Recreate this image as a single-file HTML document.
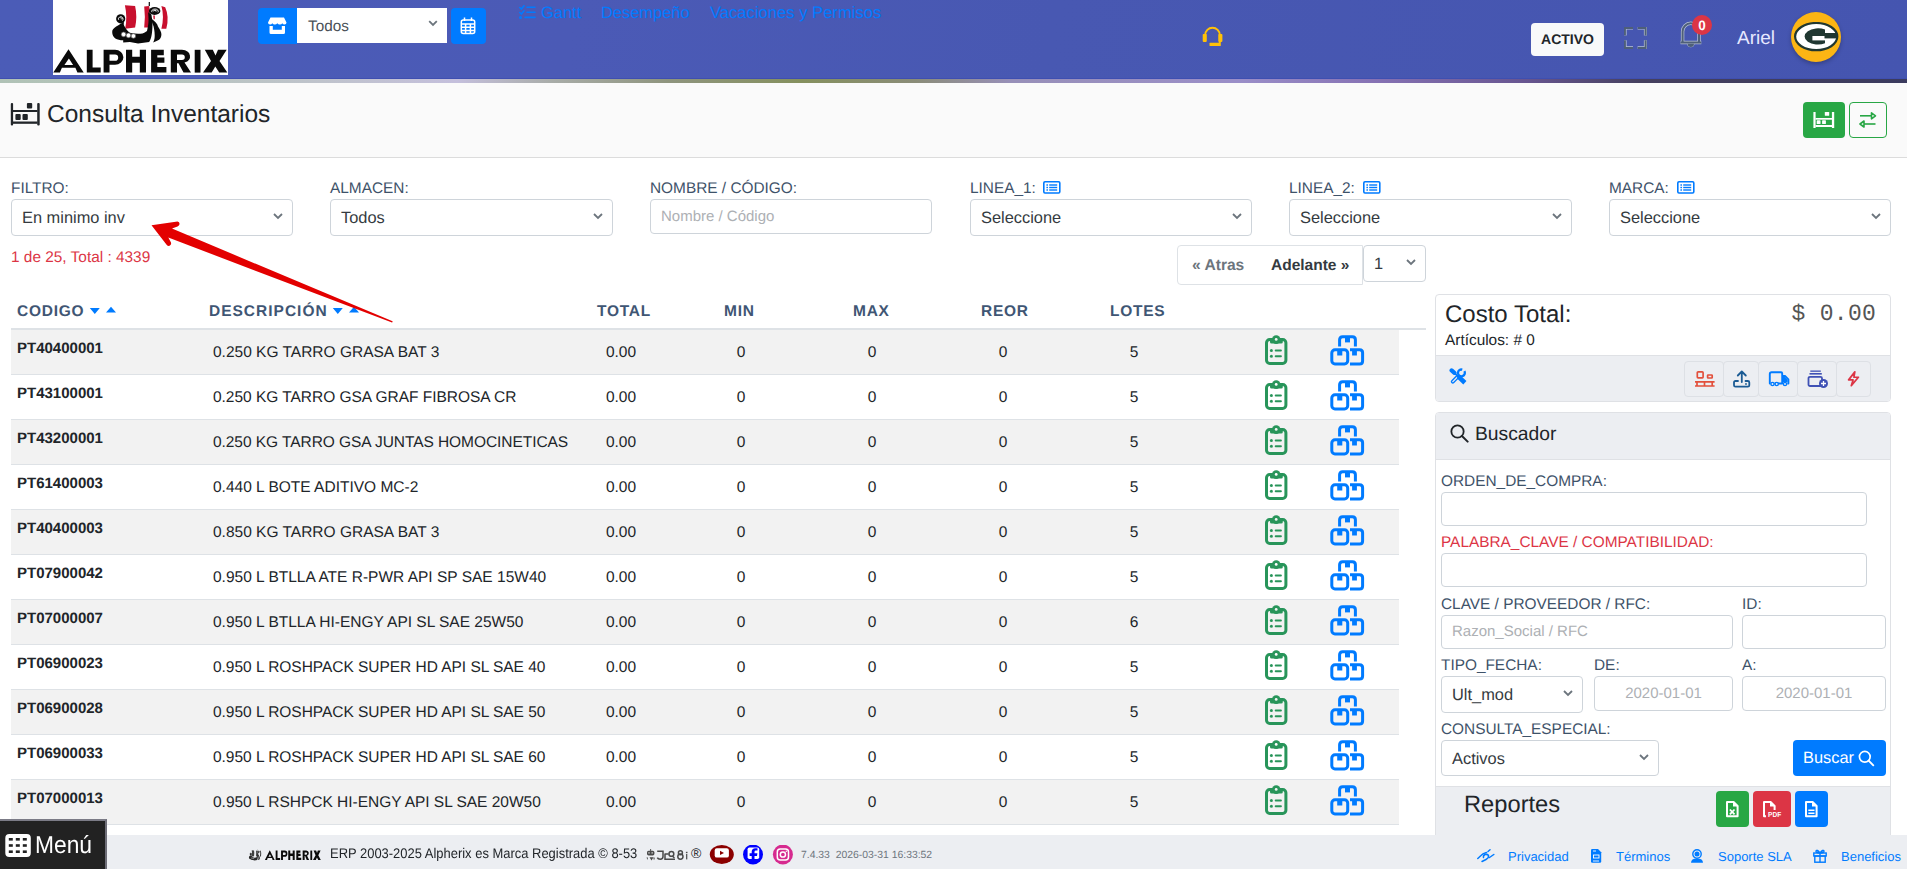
<!DOCTYPE html>
<html><head><meta charset="utf-8"><title>Consulta Inventarios</title>
<style>
*{box-sizing:border-box;margin:0;padding:0}
html,body{width:1907px;height:869px;overflow:hidden;background:#fff;font-family:"Liberation Sans",sans-serif;color:#212529;position:relative;text-rendering:geometricPrecision}
.abs{position:absolute}
#hdr{position:absolute;left:0;top:0;width:1907px;height:79px;background:linear-gradient(100deg,#4b5cb7 0%,#4b5ab6 30%,#4858b2 55%,#4555b0 100%);border-bottom:1px solid #3f4fb0}
#strip{position:absolute;left:0;top:79px;width:1907px;height:4px;background:linear-gradient(90deg,#b0c2b6 0%,#b6c4bc 8%,#bfc3cc 17%,#c4bfdc 24%,#a8aca8 29%,#8e947e 35%,#85905e 42%,#8a8c78 48%,#978fb8 53%,#9a8ec8 65%,#8672b4 72%,#675590 80%,#45405f 86%,#3b3b5e 100%);box-shadow:0 1px 1px rgba(0,0,0,0.08)}
#titlebar{position:absolute;left:0;top:83px;width:1907px;height:75px;background:#fafafa;border-bottom:1px solid #dcdcdc}
.lbl{position:absolute;font-size:15.4px;color:#3e5269;line-height:17px;margin-top:0px;white-space:nowrap}
.sel{position:absolute;height:37px;border:1px solid #ced4da;border-radius:4px;background:#fff;font-size:16.4px;color:#343a40;line-height:37px;padding-left:10px;white-space:nowrap}
.sel .chev{position:absolute;right:9px;top:11px;width:10px;height:10px}
.inp{position:absolute;border:1px solid #ced4da;border-radius:4px;background:#fff;font-size:15px;color:#adb0b4;white-space:nowrap}
.th{position:absolute;top:303px;font-size:15.5px;font-weight:bold;letter-spacing:0.75px;color:#3f5674;line-height:17px;white-space:nowrap}
.row{position:absolute;left:11px;width:1388px;height:45px;border-bottom:1px solid #dee2e6}
.row .code{position:absolute;left:6px;top:10px;font-weight:bold;font-size:15px;line-height:17px;color:#212529}
.row .desc{position:absolute;left:202px;top:14px;font-size:15.5px;line-height:17px;color:#212529;white-space:nowrap}
.row .num{position:absolute;width:80px;text-align:center;top:14px;font-size:15.5px;line-height:17px;color:#212529}
.row .ico1{position:absolute;left:1254px;top:5px;width:22px;height:31px}
.row .ico2{position:absolute;left:1319px;top:5px;width:34px;height:31px}
</style></head><body>
<div id="hdr"></div>
<div id="strip"></div>
<!-- logo -->
<div class="abs" style="left:53px;top:0;width:175px;height:75px;background:#fff"></div>
<svg class="abs" style="left:0;top:0" width="240" height="80" viewBox="0 0 240 80">
<g id="shipall"> <g fill="#c8102e" class="sails">
  <path d="M124.9,5.2 L135.1,6.1 Q137.5,16.6 135.1,27.6 L125.2,28.7 Q127.5,16.6 124.9,5.2Z"/>
  <path d="M144.2,6.4 L149.2,6.1 L150.9,27.6 L144.2,27.6 Q145.5,16 144.2,6.4Z"/>
  <path d="M153.2,15.5 H154.8 V19.3 H153.6Z"/>
  <path d="M161.4,6.1 L165.2,7.2 Q169.5,16.6 166.3,28.7 L161.4,28.7 Q164.5,16.6 161.4,6.1Z"/>
 </g>
 <g fill="#0a0a0a">
  <rect x="148.7" y="2" width="1.2" height="4"/>
  <circle cx="120.7" cy="18.8" r="4.6"/>
  <path d="M123.8,21.5 C119,26 112.2,27 112.2,32 C112.2,38 117,40.3 123.2,40.3 L123.2,42.5 L129.9,42 L138.1,43.6 L149.2,42 C152,38 152.5,30 152.5,22.1 L151.4,14.4 L148.1,12.2 C148.5,18 149.2,22 147,30.9 C144,33.5 141,33.7 138.1,33.7 C133,33.7 130,33 128.8,32 C126,29.5 124.5,26 123.8,24.9Z"/>
  <ellipse cx="154.6" cy="11" rx="5.8" ry="3.9"/>
  <path d="M150.9,18.2 C155,21 157.5,24 158,26.5 C160,30 161.4,32 161.4,34.3 C161.4,37 160.5,38.5 159.1,39.8 C157,41 155,42 153.1,42.5 C154.5,40 154.7,38 154.7,35.4 C154.7,31 154,29 153.6,26.5 C152.5,23 151.5,21 150.9,18.2Z"/>
 </g>
 <g fill="none" stroke="#fff" stroke-width="0.9">
  <path d="M118.6,19.8 A2.3,2.3 0 1 1 122.4,20.6 M120.2,18.2 A0.9,0.9 0 1 1 121.4,19.4"/>
  <path d="M152,12.2 A3.3,2.2 0 1 1 157.9,12.3 M153.6,11.4 A1.3,0.9 0 1 1 156,11.6"/>
 </g>
 <g fill="#fff" stroke="#666" stroke-width="0.7">
  <circle cx="123.6" cy="34.4" r="2.3"/><circle cx="128.5" cy="35.4" r="2.3"/><circle cx="133.4" cy="36" r="2.3"/>
 </g>
</g>
 <g id="letters" fill="#0a0a0a" fill-rule="evenodd">
  <path d="M53.3,72.6 L68.5,49.2 L83.7,72.6 L77.4,72.6 L75.4,67.8 L61.9,67.8 L59.9,72.6Z M68.9,58.6 L64.4,65 L73.1,65Z"/>
  <path d="M86.8,49.8 H92.6 V67.6 H100.7 V72.6 H86.8Z"/>
  <path d="M103.6,72.6 V49.8 H115 A8.4,7.5 0 0 1 115,64.8 H109.5 V72.6Z M109.5,54.6 H115 A3.2,3.1 0 0 1 115,60.8 H109.5Z"/>
  <path d="M126,49.8 H132.2 V56.7 H139.8 V49.8 H146 V72.6 H139.8 V62.8 H132.2 V72.6 H126Z"/>
  <path d="M151.1,49.8 H163.8 V55.3 H157.3 V57.6 H164.4 V62.8 H157.3 V67.1 H166.4 V72.6 H151.1Z"/>
  <path d="M170.8,72.6 V49.8 H182 A8.8,6.6 0 0 1 184.5,62.5 L191,72.6 H183.5 L178.5,63.2 H177 V72.6Z M177,54.4 H182 A2.8,2.75 0 0 1 182,59.9 H177Z"/>
  <path d="M194.7,49.8 H200.5 V72.6 H194.7Z"/>
  <path d="M204.8,49.8 H212.8 L215.5,55.5 L218,49.8 H226.7 L219.5,61 L227.3,72.6 H219.2 L215.3,66.5 L211.7,72.6 H203 L211,61Z"/>
 </g>
</svg>
<!-- store button group -->
<div class="abs" style="left:258px;top:8px;width:39px;height:36px;background:#007bff;border-radius:4px 0 0 4px"></div>
<svg class="abs" style="left:268px;top:17px" width="19" height="18" viewBox="0 0 19 18"><path fill="#fff" d="M2.5,0.5 H16 L18.5,5.5 Q18.5,7.5 16.5,7.5 Q15,7.5 14.3,6.3 Q13.6,7.5 11.8,7.5 Q10.2,7.5 9.3,6.3 Q8.4,7.5 6.8,7.5 Q5.1,7.5 4.3,6.3 Q3.6,7.5 2,7.5 Q0,7.5 0,5.5Z M1.5,9 H4.8 V12.8 H13.8 V9 H17 V15.5 Q17,17 15.5,17 H3 Q1.5,17 1.5,15.5Z"/></svg>
<div class="abs" style="left:297px;top:8px;width:150px;height:35px;background:#fff;font-size:15.3px;color:#495057;line-height:37px;padding-left:11px">Todos</div>
<svg class="abs" style="left:428px;top:20px" width="10" height="7" viewBox="0 0 10 7"><path d="M1.2,1.2 L5,5 L8.8,1.2" fill="none" stroke="#6c757d" stroke-width="1.8"/></svg>
<div class="abs" style="left:451px;top:8px;width:35px;height:36px;background:#007bff;border-radius:4px"></div>
<svg class="abs" style="left:460px;top:17px" width="17" height="18" viewBox="0 0 17 18"><g fill="none" stroke="#fff" stroke-width="1.5"><rect x="1.3" y="3" width="13.4" height="13.6" rx="2"/><path d="M4.5,0.5V4 M11.5,0.5V4 M1.3,7H14.7 M1.3,10.2H14.7 M1.3,13.4H14.7 M5.6,7V16.6 M10.4,7V16.6"/></g></svg>
<!-- nav links -->
<svg class="abs" style="left:519px;top:5px" width="17" height="15" viewBox="0 0 17 15"><g fill="none" stroke="#007bff" stroke-width="1.6" stroke-linecap="round"><path d="M0.8,2.5 L2.4,4 L5,0.8 M0.8,7.5 L2.4,9 L5,5.8"/><path d="M8,2.2H16 M8,7.2H16 M6,12.4H16"/></g><circle cx="1.5" cy="12.6" r="1.5" fill="#007bff"/></svg>
<div class="abs" style="left:541px;top:4px;font-size:16.45px;color:#007bff;line-height:18px;white-space:nowrap">Gantt</div>
<div class="abs" style="left:601px;top:4px;font-size:16.45px;color:#007bff;line-height:18px;white-space:nowrap">Desempeño</div>
<div class="abs" style="left:710px;top:4px;font-size:16.6px;color:#007bff;line-height:18px;white-space:nowrap">Vacaciones y Permisos</div>
<!-- headset -->
<svg class="abs" style="left:1202px;top:26px" width="21" height="21" viewBox="0 0 21 21"><g fill="#ffc107"><path d="M2.2,9 A8.3,8.3 0 0 1 18.8,9 V17 H16.8 V9 A6.3,6.3 0 0 0 4.2,9 Z"/><rect x="0.7" y="8.1" width="4.1" height="7.8" rx="0.8"/><rect x="16.3" y="8.1" width="4.1" height="7.8" rx="0.8"/><rect x="7.5" y="16.8" width="11.3" height="3.2" rx="0.6"/></g></svg>
<!-- right header -->
<div class="abs" style="left:1531px;top:23px;width:73px;height:33px;background:#f8f9fa;border-radius:4px;font-size:14px;font-weight:bold;color:#212529;line-height:33px;text-align:center">ACTIVO</div>
<svg class="abs" style="left:1624px;top:27px" width="23" height="22" viewBox="0 0 23 22"><path d="M0.9,8.6 V0.9 H9 M13.6,0.9 H21.6 V8.6 M21.6,13.2 V20.9 H13.6 M9,20.9 H0.9 V13.2" fill="none" stroke="#b9c3d6" stroke-width="3.4"/><path d="M0.9,8.6 V0.9 H9 M13.6,0.9 H21.6 V8.6 M21.6,13.2 V20.9 H13.6 M9,20.9 H0.9 V13.2" fill="none" stroke="#4e5f78" stroke-width="2"/></svg>
<svg class="abs" style="left:1678px;top:21px" width="26" height="28" viewBox="0 0 26 28"><path d="M4.6,21.5 V10.5 A8.2,8.2 0 0 1 21,10.5 V21.5 M2.5,21.5 H23.3" fill="none" stroke="#b9c3d6" stroke-width="3.4"/><path d="M9.1,22.6 A3.7,3.7 0 0 0 16.5,22.6Z" fill="#b9c3d6"/><path d="M4.6,21.5 V10.5 A8.2,8.2 0 0 1 21,10.5 V21.5 M2.5,21.5 H23.3" fill="none" stroke="#4e5f78" stroke-width="2"/><path d="M9.6,22.8 A3.2,3.2 0 0 0 16,22.8Z" fill="#4e5f78"/></svg>
<div class="abs" style="left:1692px;top:14.5px;width:20px;height:20px;border-radius:50%;background:#dc3545;color:#fff;font-size:13.5px;font-weight:bold;line-height:21px;text-align:center">0</div>
<div class="abs" style="left:1737px;top:28px;font-size:19px;color:#e6e8ff;line-height:22px">Ariel</div>
<div class="abs" style="left:1791px;top:12px;width:50px;height:50px;border-radius:50%;background:#fcb514;box-shadow:0 2px 4px rgba(0,0,0,0.25)"></div>
<svg class="abs" style="left:1794px;top:22px" width="45" height="30" viewBox="0 0 45 30"><ellipse cx="22.2" cy="14.6" rx="21.1" ry="13.6" fill="#fff" stroke="#203731" stroke-width="2.2"/><path d="M31,7.5 A13.4,8.1 0 1 0 31,21.3Z" fill="#203731"/><rect x="18.4" y="14" width="12.6" height="4.4" fill="#fff"/><rect x="30.5" y="11" width="12.6" height="5.4" fill="#203731"/></svg>
<!-- title bar -->
<div id="titlebar"></div>
<svg class="abs" style="left:10px;top:102px" width="31" height="25" viewBox="0 0 31 25"><g fill="#212529"><rect x="0.8" y="1" width="2.3" height="22.6" rx="1"/><rect x="27.2" y="1" width="2.5" height="22.6" rx="1"/><rect x="3" y="8" width="24.5" height="2"/><rect x="3" y="19.5" width="24.5" height="2.3"/><rect x="16.9" y="1" width="5.3" height="5.6" rx="1"/><rect x="5.4" y="12.1" width="5.3" height="5.8" rx="1"/><rect x="12.5" y="12.1" width="5.3" height="5.8" rx="1"/></g></svg>
<div class="abs" style="left:47px;top:101px;font-size:24.5px;color:#212529;line-height:28px;white-space:nowrap">Consulta Inventarios</div>
<div class="abs" style="left:1803px;top:102px;width:42px;height:36px;background:#28a745;border-radius:4px"></div>
<svg class="abs" style="left:1812px;top:111px" width="24" height="18" viewBox="0 0 24 18"><g fill="#fff"><rect x="1.4" y="1" width="2.2" height="16"/><rect x="19.9" y="1" width="2.3" height="16"/><rect x="3.5" y="7" width="16.5" height="1.7"/><rect x="3.5" y="14" width="16.5" height="2"/><rect x="12.8" y="1" width="4.4" height="3.8" rx="0.6"/><rect x="4.7" y="9.2" width="3.8" height="3.8" rx="0.6"/><rect x="10.1" y="9.2" width="3.8" height="3.8" rx="0.6"/></g></svg>
<div class="abs" style="left:1849px;top:102px;width:38px;height:36px;border:1px solid #28a745;border-radius:4px"></div>
<svg class="abs" style="left:1859px;top:111px" width="18" height="18" viewBox="0 0 18 18"><g fill="none" stroke="#28a745" stroke-width="1.6" stroke-linejoin="round"><path d="M1,4.8 H12.5"/><path d="M12.5,1.8 L16.5,4.8 L12.5,7.8Z"/><path d="M16.5,13 H5"/><path d="M5,10 L1,13 L5,16Z"/></g></svg>
<!-- filters -->
<div class="lbl" style="left:11px;top:180px">FILTRO:</div>
<div class="sel" style="left:11px;top:199px;width:282px">En minimo inv<svg class="chev" viewBox="0 0 10 10"><path d="M1,3 L5,7 L9,3" fill="none" stroke="#6c757d" stroke-width="1.8"/></svg></div>
<div class="lbl" style="left:330px;top:180px">ALMACEN:</div>
<div class="sel" style="left:330px;top:199px;width:283px">Todos<svg class="chev" viewBox="0 0 10 10"><path d="M1,3 L5,7 L9,3" fill="none" stroke="#6c757d" stroke-width="1.8"/></svg></div>
<div class="lbl" style="left:650px;top:180px">NOMBRE / CÓDIGO:</div>
<div class="inp" style="left:650px;top:199px;width:282px;height:35px;line-height:33px;padding-left:10px">Nombre / Código</div>
<div class="lbl" style="left:970px;top:180px">LINEA_1:</div>
<svg class="abs lst" style="left:1043px;top:181px" width="18" height="13" viewBox="0 0 18 13"><rect x="0.8" y="0.8" width="16" height="11.2" rx="1.2" fill="none" stroke="#007bff" stroke-width="1.6"/><g fill="#007bff"><rect x="3.4" y="3.3" width="1.6" height="1.4"/><rect x="3.4" y="5.8" width="1.6" height="1.4"/><rect x="3.4" y="8.3" width="1.6" height="1.4"/><rect x="6.2" y="3.3" width="8" height="1.4"/><rect x="6.2" y="5.8" width="8" height="1.4"/><rect x="6.2" y="8.3" width="8" height="1.4"/></g></svg>
<div class="sel" style="left:970px;top:199px;width:282px">Seleccione<svg class="chev" viewBox="0 0 10 10"><path d="M1,3 L5,7 L9,3" fill="none" stroke="#6c757d" stroke-width="1.8"/></svg></div>
<div class="lbl" style="left:1289px;top:180px">LINEA_2:</div>
<svg class="abs lst" style="left:1363px;top:181px" width="18" height="13" viewBox="0 0 18 13"><rect x="0.8" y="0.8" width="16" height="11.2" rx="1.2" fill="none" stroke="#007bff" stroke-width="1.6"/><g fill="#007bff"><rect x="3.4" y="3.3" width="1.6" height="1.4"/><rect x="3.4" y="5.8" width="1.6" height="1.4"/><rect x="3.4" y="8.3" width="1.6" height="1.4"/><rect x="6.2" y="3.3" width="8" height="1.4"/><rect x="6.2" y="5.8" width="8" height="1.4"/><rect x="6.2" y="8.3" width="8" height="1.4"/></g></svg>
<div class="sel" style="left:1289px;top:199px;width:283px">Seleccione<svg class="chev" viewBox="0 0 10 10"><path d="M1,3 L5,7 L9,3" fill="none" stroke="#6c757d" stroke-width="1.8"/></svg></div>
<div class="lbl" style="left:1609px;top:180px">MARCA:</div>
<svg class="abs lst" style="left:1677px;top:181px" width="18" height="13" viewBox="0 0 18 13"><rect x="0.8" y="0.8" width="16" height="11.2" rx="1.2" fill="none" stroke="#007bff" stroke-width="1.6"/><g fill="#007bff"><rect x="3.4" y="3.3" width="1.6" height="1.4"/><rect x="3.4" y="5.8" width="1.6" height="1.4"/><rect x="3.4" y="8.3" width="1.6" height="1.4"/><rect x="6.2" y="3.3" width="8" height="1.4"/><rect x="6.2" y="5.8" width="8" height="1.4"/><rect x="6.2" y="8.3" width="8" height="1.4"/></g></svg>
<div class="sel" style="left:1609px;top:199px;width:282px">Seleccione<svg class="chev" viewBox="0 0 10 10"><path d="M1,3 L5,7 L9,3" fill="none" stroke="#6c757d" stroke-width="1.8"/></svg></div>
<div class="abs" style="left:11px;top:248.5px;font-size:15.4px;color:#dc3545;line-height:17px;white-space:nowrap">1 de 25, Total : 4339</div>
<!-- pagination -->
<div class="abs" style="left:1177px;top:245px;width:186px;height:40px;border:1px solid #dee2e6;border-radius:4px 0 0 4px;background:#fff"></div>
<div class="abs" style="left:1192px;top:257px;font-size:15.6px;font-weight:bold;color:#6c757d;line-height:17px;white-space:nowrap">« Atras</div>
<div class="abs" style="left:1271px;top:257px;font-size:15.5px;font-weight:bold;color:#343a40;line-height:17px;white-space:nowrap">Adelante »</div>
<div class="sel" style="left:1363px;top:245px;width:63px;height:37px">1<svg class="chev" viewBox="0 0 10 10"><path d="M1,3 L5,7 L9,3" fill="none" stroke="#6c757d" stroke-width="1.8"/></svg></div>
<!-- table header -->
<div class="th" style="left:17px">CODIGO</div>
<svg class="abs" style="left:89px;top:306px" width="28" height="9" viewBox="0 0 28 9"><path d="M0.8,2 H10.8 L5.8,8Z M17,6.5 H27 L22,0.8Z" fill="#007bff"/></svg>
<div class="th" style="left:209px;letter-spacing:1px">DESCRIPCIÓN</div>
<svg class="abs" style="left:332px;top:306px" width="28" height="9" viewBox="0 0 28 9"><path d="M0.8,2 H10.8 L5.8,8Z M17,6.5 H27 L22,0.8Z" fill="#007bff"/></svg>
<div class="th" style="left:597px">TOTAL</div>
<div class="th" style="left:724px">MIN</div>
<div class="th" style="left:853px">MAX</div>
<div class="th" style="left:981px">REOR</div>
<div class="th" style="left:1110px">LOTES</div>
<div class="abs" style="left:11px;top:328px;width:1415px;height:2px;background:#dee2e6"></div>
<div class="row" style="top:330px;background:#f2f2f2"><div class="code">PT40400001</div><div class="desc" style="letter-spacing:0px">0.250 KG TARRO GRASA BAT 3</div><div class="num" style="left:570px">0.00</div><div class="num" style="left:690px">0</div><div class="num" style="left:821px">0</div><div class="num" style="left:952px">0</div><div class="num" style="left:1083px">5</div><div class="ico1"><svg width="23" height="31" viewBox="0 0 23 31"><g fill="none" stroke="#28955a" stroke-width="3"><rect x="1.5" y="4.5" width="19.4" height="24" rx="3.2"/></g><g fill="#28955a"><path d="M5,3 H17.8 V7 Q17.8,8.6 16.2,8.6 H6.6 Q5,8.6 5,7Z"/><circle cx="11.2" cy="4.6" r="4.3"/><circle cx="6.4" cy="15.5" r="1.5"/><circle cx="6.4" cy="21.2" r="1.5"/><rect x="9.7" y="14.5" width="7.2" height="2.1" rx="1"/><rect x="9.7" y="20.2" width="7.2" height="2.1" rx="1"/></g><circle cx="11.2" cy="4.4" r="1.4" fill="#f2f2f2"/></svg>
</div><div class="ico2"><svg width="35" height="31" viewBox="0 0 35 31"><g fill="none" stroke="#007bff" stroke-width="3"><path d="M9.6,11.5 V4.7 Q9.6,1.7 12.6,1.7 H22.4 Q25.4,1.7 25.4,4.7 V11.5"/><rect x="1.8" y="14.8" width="15.9" height="14.1" rx="3.2"/><path d="M20,14.8 H29.6 Q32.6,14.8 32.6,17.8 V25.9 Q32.6,28.9 29.6,28.9 H20"/></g><g fill="#007bff"><rect x="15" y="2" width="5" height="5.4"/><rect x="7.2" y="14" width="5.1" height="6.5"/><rect x="22.1" y="14" width="4.8" height="6.5"/></g></svg>
</div></div>
<div class="row" style="top:375px;background:#ffffff"><div class="code">PT43100001</div><div class="desc" style="letter-spacing:-0.03px">0.250 KG TARRO GSA GRAF FIBROSA CR</div><div class="num" style="left:570px">0.00</div><div class="num" style="left:690px">0</div><div class="num" style="left:821px">0</div><div class="num" style="left:952px">0</div><div class="num" style="left:1083px">5</div><div class="ico1"><svg width="23" height="31" viewBox="0 0 23 31"><g fill="none" stroke="#28955a" stroke-width="3"><rect x="1.5" y="4.5" width="19.4" height="24" rx="3.2"/></g><g fill="#28955a"><path d="M5,3 H17.8 V7 Q17.8,8.6 16.2,8.6 H6.6 Q5,8.6 5,7Z"/><circle cx="11.2" cy="4.6" r="4.3"/><circle cx="6.4" cy="15.5" r="1.5"/><circle cx="6.4" cy="21.2" r="1.5"/><rect x="9.7" y="14.5" width="7.2" height="2.1" rx="1"/><rect x="9.7" y="20.2" width="7.2" height="2.1" rx="1"/></g><circle cx="11.2" cy="4.4" r="1.4" fill="#ffffff"/></svg>
</div><div class="ico2"><svg width="35" height="31" viewBox="0 0 35 31"><g fill="none" stroke="#007bff" stroke-width="3"><path d="M9.6,11.5 V4.7 Q9.6,1.7 12.6,1.7 H22.4 Q25.4,1.7 25.4,4.7 V11.5"/><rect x="1.8" y="14.8" width="15.9" height="14.1" rx="3.2"/><path d="M20,14.8 H29.6 Q32.6,14.8 32.6,17.8 V25.9 Q32.6,28.9 29.6,28.9 H20"/></g><g fill="#007bff"><rect x="15" y="2" width="5" height="5.4"/><rect x="7.2" y="14" width="5.1" height="6.5"/><rect x="22.1" y="14" width="4.8" height="6.5"/></g></svg>
</div></div>
<div class="row" style="top:420px;background:#f2f2f2"><div class="code">PT43200001</div><div class="desc" style="letter-spacing:-0.06px">0.250 KG TARRO GSA JUNTAS HOMOCINETICAS</div><div class="num" style="left:570px">0.00</div><div class="num" style="left:690px">0</div><div class="num" style="left:821px">0</div><div class="num" style="left:952px">0</div><div class="num" style="left:1083px">5</div><div class="ico1"><svg width="23" height="31" viewBox="0 0 23 31"><g fill="none" stroke="#28955a" stroke-width="3"><rect x="1.5" y="4.5" width="19.4" height="24" rx="3.2"/></g><g fill="#28955a"><path d="M5,3 H17.8 V7 Q17.8,8.6 16.2,8.6 H6.6 Q5,8.6 5,7Z"/><circle cx="11.2" cy="4.6" r="4.3"/><circle cx="6.4" cy="15.5" r="1.5"/><circle cx="6.4" cy="21.2" r="1.5"/><rect x="9.7" y="14.5" width="7.2" height="2.1" rx="1"/><rect x="9.7" y="20.2" width="7.2" height="2.1" rx="1"/></g><circle cx="11.2" cy="4.4" r="1.4" fill="#f2f2f2"/></svg>
</div><div class="ico2"><svg width="35" height="31" viewBox="0 0 35 31"><g fill="none" stroke="#007bff" stroke-width="3"><path d="M9.6,11.5 V4.7 Q9.6,1.7 12.6,1.7 H22.4 Q25.4,1.7 25.4,4.7 V11.5"/><rect x="1.8" y="14.8" width="15.9" height="14.1" rx="3.2"/><path d="M20,14.8 H29.6 Q32.6,14.8 32.6,17.8 V25.9 Q32.6,28.9 29.6,28.9 H20"/></g><g fill="#007bff"><rect x="15" y="2" width="5" height="5.4"/><rect x="7.2" y="14" width="5.1" height="6.5"/><rect x="22.1" y="14" width="4.8" height="6.5"/></g></svg>
</div></div>
<div class="row" style="top:465px;background:#ffffff"><div class="code">PT61400003</div><div class="desc" style="letter-spacing:0px">0.440 L BOTE ADITIVO MC-2</div><div class="num" style="left:570px">0.00</div><div class="num" style="left:690px">0</div><div class="num" style="left:821px">0</div><div class="num" style="left:952px">0</div><div class="num" style="left:1083px">5</div><div class="ico1"><svg width="23" height="31" viewBox="0 0 23 31"><g fill="none" stroke="#28955a" stroke-width="3"><rect x="1.5" y="4.5" width="19.4" height="24" rx="3.2"/></g><g fill="#28955a"><path d="M5,3 H17.8 V7 Q17.8,8.6 16.2,8.6 H6.6 Q5,8.6 5,7Z"/><circle cx="11.2" cy="4.6" r="4.3"/><circle cx="6.4" cy="15.5" r="1.5"/><circle cx="6.4" cy="21.2" r="1.5"/><rect x="9.7" y="14.5" width="7.2" height="2.1" rx="1"/><rect x="9.7" y="20.2" width="7.2" height="2.1" rx="1"/></g><circle cx="11.2" cy="4.4" r="1.4" fill="#ffffff"/></svg>
</div><div class="ico2"><svg width="35" height="31" viewBox="0 0 35 31"><g fill="none" stroke="#007bff" stroke-width="3"><path d="M9.6,11.5 V4.7 Q9.6,1.7 12.6,1.7 H22.4 Q25.4,1.7 25.4,4.7 V11.5"/><rect x="1.8" y="14.8" width="15.9" height="14.1" rx="3.2"/><path d="M20,14.8 H29.6 Q32.6,14.8 32.6,17.8 V25.9 Q32.6,28.9 29.6,28.9 H20"/></g><g fill="#007bff"><rect x="15" y="2" width="5" height="5.4"/><rect x="7.2" y="14" width="5.1" height="6.5"/><rect x="22.1" y="14" width="4.8" height="6.5"/></g></svg>
</div></div>
<div class="row" style="top:510px;background:#f2f2f2"><div class="code">PT40400003</div><div class="desc" style="letter-spacing:0px">0.850 KG TARRO GRASA BAT 3</div><div class="num" style="left:570px">0.00</div><div class="num" style="left:690px">0</div><div class="num" style="left:821px">0</div><div class="num" style="left:952px">0</div><div class="num" style="left:1083px">5</div><div class="ico1"><svg width="23" height="31" viewBox="0 0 23 31"><g fill="none" stroke="#28955a" stroke-width="3"><rect x="1.5" y="4.5" width="19.4" height="24" rx="3.2"/></g><g fill="#28955a"><path d="M5,3 H17.8 V7 Q17.8,8.6 16.2,8.6 H6.6 Q5,8.6 5,7Z"/><circle cx="11.2" cy="4.6" r="4.3"/><circle cx="6.4" cy="15.5" r="1.5"/><circle cx="6.4" cy="21.2" r="1.5"/><rect x="9.7" y="14.5" width="7.2" height="2.1" rx="1"/><rect x="9.7" y="20.2" width="7.2" height="2.1" rx="1"/></g><circle cx="11.2" cy="4.4" r="1.4" fill="#f2f2f2"/></svg>
</div><div class="ico2"><svg width="35" height="31" viewBox="0 0 35 31"><g fill="none" stroke="#007bff" stroke-width="3"><path d="M9.6,11.5 V4.7 Q9.6,1.7 12.6,1.7 H22.4 Q25.4,1.7 25.4,4.7 V11.5"/><rect x="1.8" y="14.8" width="15.9" height="14.1" rx="3.2"/><path d="M20,14.8 H29.6 Q32.6,14.8 32.6,17.8 V25.9 Q32.6,28.9 29.6,28.9 H20"/></g><g fill="#007bff"><rect x="15" y="2" width="5" height="5.4"/><rect x="7.2" y="14" width="5.1" height="6.5"/><rect x="22.1" y="14" width="4.8" height="6.5"/></g></svg>
</div></div>
<div class="row" style="top:555px;background:#ffffff"><div class="code">PT07900042</div><div class="desc" style="letter-spacing:0px">0.950 L BTLLA ATE R-PWR API SP SAE 15W40</div><div class="num" style="left:570px">0.00</div><div class="num" style="left:690px">0</div><div class="num" style="left:821px">0</div><div class="num" style="left:952px">0</div><div class="num" style="left:1083px">5</div><div class="ico1"><svg width="23" height="31" viewBox="0 0 23 31"><g fill="none" stroke="#28955a" stroke-width="3"><rect x="1.5" y="4.5" width="19.4" height="24" rx="3.2"/></g><g fill="#28955a"><path d="M5,3 H17.8 V7 Q17.8,8.6 16.2,8.6 H6.6 Q5,8.6 5,7Z"/><circle cx="11.2" cy="4.6" r="4.3"/><circle cx="6.4" cy="15.5" r="1.5"/><circle cx="6.4" cy="21.2" r="1.5"/><rect x="9.7" y="14.5" width="7.2" height="2.1" rx="1"/><rect x="9.7" y="20.2" width="7.2" height="2.1" rx="1"/></g><circle cx="11.2" cy="4.4" r="1.4" fill="#ffffff"/></svg>
</div><div class="ico2"><svg width="35" height="31" viewBox="0 0 35 31"><g fill="none" stroke="#007bff" stroke-width="3"><path d="M9.6,11.5 V4.7 Q9.6,1.7 12.6,1.7 H22.4 Q25.4,1.7 25.4,4.7 V11.5"/><rect x="1.8" y="14.8" width="15.9" height="14.1" rx="3.2"/><path d="M20,14.8 H29.6 Q32.6,14.8 32.6,17.8 V25.9 Q32.6,28.9 29.6,28.9 H20"/></g><g fill="#007bff"><rect x="15" y="2" width="5" height="5.4"/><rect x="7.2" y="14" width="5.1" height="6.5"/><rect x="22.1" y="14" width="4.8" height="6.5"/></g></svg>
</div></div>
<div class="row" style="top:600px;background:#f2f2f2"><div class="code">PT07000007</div><div class="desc" style="letter-spacing:0px">0.950 L BTLLA HI-ENGY API SL SAE 25W50</div><div class="num" style="left:570px">0.00</div><div class="num" style="left:690px">0</div><div class="num" style="left:821px">0</div><div class="num" style="left:952px">0</div><div class="num" style="left:1083px">6</div><div class="ico1"><svg width="23" height="31" viewBox="0 0 23 31"><g fill="none" stroke="#28955a" stroke-width="3"><rect x="1.5" y="4.5" width="19.4" height="24" rx="3.2"/></g><g fill="#28955a"><path d="M5,3 H17.8 V7 Q17.8,8.6 16.2,8.6 H6.6 Q5,8.6 5,7Z"/><circle cx="11.2" cy="4.6" r="4.3"/><circle cx="6.4" cy="15.5" r="1.5"/><circle cx="6.4" cy="21.2" r="1.5"/><rect x="9.7" y="14.5" width="7.2" height="2.1" rx="1"/><rect x="9.7" y="20.2" width="7.2" height="2.1" rx="1"/></g><circle cx="11.2" cy="4.4" r="1.4" fill="#f2f2f2"/></svg>
</div><div class="ico2"><svg width="35" height="31" viewBox="0 0 35 31"><g fill="none" stroke="#007bff" stroke-width="3"><path d="M9.6,11.5 V4.7 Q9.6,1.7 12.6,1.7 H22.4 Q25.4,1.7 25.4,4.7 V11.5"/><rect x="1.8" y="14.8" width="15.9" height="14.1" rx="3.2"/><path d="M20,14.8 H29.6 Q32.6,14.8 32.6,17.8 V25.9 Q32.6,28.9 29.6,28.9 H20"/></g><g fill="#007bff"><rect x="15" y="2" width="5" height="5.4"/><rect x="7.2" y="14" width="5.1" height="6.5"/><rect x="22.1" y="14" width="4.8" height="6.5"/></g></svg>
</div></div>
<div class="row" style="top:645px;background:#ffffff"><div class="code">PT06900023</div><div class="desc" style="letter-spacing:-0.035px">0.950 L ROSHPACK SUPER HD API SL SAE 40</div><div class="num" style="left:570px">0.00</div><div class="num" style="left:690px">0</div><div class="num" style="left:821px">0</div><div class="num" style="left:952px">0</div><div class="num" style="left:1083px">5</div><div class="ico1"><svg width="23" height="31" viewBox="0 0 23 31"><g fill="none" stroke="#28955a" stroke-width="3"><rect x="1.5" y="4.5" width="19.4" height="24" rx="3.2"/></g><g fill="#28955a"><path d="M5,3 H17.8 V7 Q17.8,8.6 16.2,8.6 H6.6 Q5,8.6 5,7Z"/><circle cx="11.2" cy="4.6" r="4.3"/><circle cx="6.4" cy="15.5" r="1.5"/><circle cx="6.4" cy="21.2" r="1.5"/><rect x="9.7" y="14.5" width="7.2" height="2.1" rx="1"/><rect x="9.7" y="20.2" width="7.2" height="2.1" rx="1"/></g><circle cx="11.2" cy="4.4" r="1.4" fill="#ffffff"/></svg>
</div><div class="ico2"><svg width="35" height="31" viewBox="0 0 35 31"><g fill="none" stroke="#007bff" stroke-width="3"><path d="M9.6,11.5 V4.7 Q9.6,1.7 12.6,1.7 H22.4 Q25.4,1.7 25.4,4.7 V11.5"/><rect x="1.8" y="14.8" width="15.9" height="14.1" rx="3.2"/><path d="M20,14.8 H29.6 Q32.6,14.8 32.6,17.8 V25.9 Q32.6,28.9 29.6,28.9 H20"/></g><g fill="#007bff"><rect x="15" y="2" width="5" height="5.4"/><rect x="7.2" y="14" width="5.1" height="6.5"/><rect x="22.1" y="14" width="4.8" height="6.5"/></g></svg>
</div></div>
<div class="row" style="top:690px;background:#f2f2f2"><div class="code">PT06900028</div><div class="desc" style="letter-spacing:-0.035px">0.950 L ROSHPACK SUPER HD API SL SAE 50</div><div class="num" style="left:570px">0.00</div><div class="num" style="left:690px">0</div><div class="num" style="left:821px">0</div><div class="num" style="left:952px">0</div><div class="num" style="left:1083px">5</div><div class="ico1"><svg width="23" height="31" viewBox="0 0 23 31"><g fill="none" stroke="#28955a" stroke-width="3"><rect x="1.5" y="4.5" width="19.4" height="24" rx="3.2"/></g><g fill="#28955a"><path d="M5,3 H17.8 V7 Q17.8,8.6 16.2,8.6 H6.6 Q5,8.6 5,7Z"/><circle cx="11.2" cy="4.6" r="4.3"/><circle cx="6.4" cy="15.5" r="1.5"/><circle cx="6.4" cy="21.2" r="1.5"/><rect x="9.7" y="14.5" width="7.2" height="2.1" rx="1"/><rect x="9.7" y="20.2" width="7.2" height="2.1" rx="1"/></g><circle cx="11.2" cy="4.4" r="1.4" fill="#f2f2f2"/></svg>
</div><div class="ico2"><svg width="35" height="31" viewBox="0 0 35 31"><g fill="none" stroke="#007bff" stroke-width="3"><path d="M9.6,11.5 V4.7 Q9.6,1.7 12.6,1.7 H22.4 Q25.4,1.7 25.4,4.7 V11.5"/><rect x="1.8" y="14.8" width="15.9" height="14.1" rx="3.2"/><path d="M20,14.8 H29.6 Q32.6,14.8 32.6,17.8 V25.9 Q32.6,28.9 29.6,28.9 H20"/></g><g fill="#007bff"><rect x="15" y="2" width="5" height="5.4"/><rect x="7.2" y="14" width="5.1" height="6.5"/><rect x="22.1" y="14" width="4.8" height="6.5"/></g></svg>
</div></div>
<div class="row" style="top:735px;background:#ffffff"><div class="code">PT06900033</div><div class="desc" style="letter-spacing:-0.035px">0.950 L ROSHPACK SUPER HD API SL SAE 60</div><div class="num" style="left:570px">0.00</div><div class="num" style="left:690px">0</div><div class="num" style="left:821px">0</div><div class="num" style="left:952px">0</div><div class="num" style="left:1083px">5</div><div class="ico1"><svg width="23" height="31" viewBox="0 0 23 31"><g fill="none" stroke="#28955a" stroke-width="3"><rect x="1.5" y="4.5" width="19.4" height="24" rx="3.2"/></g><g fill="#28955a"><path d="M5,3 H17.8 V7 Q17.8,8.6 16.2,8.6 H6.6 Q5,8.6 5,7Z"/><circle cx="11.2" cy="4.6" r="4.3"/><circle cx="6.4" cy="15.5" r="1.5"/><circle cx="6.4" cy="21.2" r="1.5"/><rect x="9.7" y="14.5" width="7.2" height="2.1" rx="1"/><rect x="9.7" y="20.2" width="7.2" height="2.1" rx="1"/></g><circle cx="11.2" cy="4.4" r="1.4" fill="#ffffff"/></svg>
</div><div class="ico2"><svg width="35" height="31" viewBox="0 0 35 31"><g fill="none" stroke="#007bff" stroke-width="3"><path d="M9.6,11.5 V4.7 Q9.6,1.7 12.6,1.7 H22.4 Q25.4,1.7 25.4,4.7 V11.5"/><rect x="1.8" y="14.8" width="15.9" height="14.1" rx="3.2"/><path d="M20,14.8 H29.6 Q32.6,14.8 32.6,17.8 V25.9 Q32.6,28.9 29.6,28.9 H20"/></g><g fill="#007bff"><rect x="15" y="2" width="5" height="5.4"/><rect x="7.2" y="14" width="5.1" height="6.5"/><rect x="22.1" y="14" width="4.8" height="6.5"/></g></svg>
</div></div>
<div class="row" style="top:780px;background:#f2f2f2"><div class="code">PT07000013</div><div class="desc" style="letter-spacing:-0.02px">0.950 L RSHPCK HI-ENGY API SL SAE 20W50</div><div class="num" style="left:570px">0.00</div><div class="num" style="left:690px">0</div><div class="num" style="left:821px">0</div><div class="num" style="left:952px">0</div><div class="num" style="left:1083px">5</div><div class="ico1"><svg width="23" height="31" viewBox="0 0 23 31"><g fill="none" stroke="#28955a" stroke-width="3"><rect x="1.5" y="4.5" width="19.4" height="24" rx="3.2"/></g><g fill="#28955a"><path d="M5,3 H17.8 V7 Q17.8,8.6 16.2,8.6 H6.6 Q5,8.6 5,7Z"/><circle cx="11.2" cy="4.6" r="4.3"/><circle cx="6.4" cy="15.5" r="1.5"/><circle cx="6.4" cy="21.2" r="1.5"/><rect x="9.7" y="14.5" width="7.2" height="2.1" rx="1"/><rect x="9.7" y="20.2" width="7.2" height="2.1" rx="1"/></g><circle cx="11.2" cy="4.4" r="1.4" fill="#f2f2f2"/></svg>
</div><div class="ico2"><svg width="35" height="31" viewBox="0 0 35 31"><g fill="none" stroke="#007bff" stroke-width="3"><path d="M9.6,11.5 V4.7 Q9.6,1.7 12.6,1.7 H22.4 Q25.4,1.7 25.4,4.7 V11.5"/><rect x="1.8" y="14.8" width="15.9" height="14.1" rx="3.2"/><path d="M20,14.8 H29.6 Q32.6,14.8 32.6,17.8 V25.9 Q32.6,28.9 29.6,28.9 H20"/></g><g fill="#007bff"><rect x="15" y="2" width="5" height="5.4"/><rect x="7.2" y="14" width="5.1" height="6.5"/><rect x="22.1" y="14" width="4.8" height="6.5"/></g></svg>
</div></div><!-- right panel -->
<div class="abs" style="left:1435px;top:294px;width:456px;height:108px;border:1px solid #dfe1e5;border-radius:4px;background:#fff;overflow:hidden">
 <div class="abs" style="left:0;top:60px;width:456px;height:47px;background:#eceef2;border-top:1px solid #dfe1e5"></div>
</div>
<div class="abs" style="left:1445px;top:301.5px;font-size:24px;line-height:26px;color:#212529;white-space:nowrap">Costo Total:</div>
<div class="abs" style="left:1791.5px;top:301px;font-size:23px;line-height:26px;font-family:'Liberation Mono',monospace;color:#555;letter-spacing:0.3px;white-space:nowrap">$ 0.00</div>
<div class="abs" style="left:1445px;top:332px;font-size:15.4px;line-height:17px;color:#212529;white-space:nowrap">Artículos: # 0</div>
<svg class="abs" style="left:1449px;top:368px" width="18" height="17" viewBox="0 0 18 17"><g stroke="#007bff" stroke-linecap="round" fill="none"><path d="M3.8,13.6 L8.2,9.2" stroke-width="4"/><path d="M3.8,13.6 L8.2,9.2" stroke="#eceef2" stroke-width="1.3"/><path d="M2.6,2.4 L5.4,4.8" stroke-width="4.2"/><path d="M5.4,4.8 L9.5,8.8" stroke-width="1.8"/><path d="M10.8,10 L14.2,13.2" stroke-width="4.6" stroke-linecap="square"/><path d="M15.34,3.2 A3.4,3.4 0 1 1 13.28,1.62" stroke-width="2.3" stroke-linecap="butt"/></g></svg>
<div class="abs" style="left:1684px;top:361px;width:187px;height:36px">
 <div class="abs" style="left:0;top:0;width:40px;height:36px;border:1px solid #dde0e5;border-radius:4px"></div>
 <div class="abs" style="left:39px;top:0;width:36px;height:36px;border:1px solid #dde0e5;border-radius:4px"></div>
 <div class="abs" style="left:74px;top:0;width:40px;height:36px;border:1px solid #dde0e5;border-radius:4px"></div>
 <div class="abs" style="left:113px;top:0;width:40px;height:36px;border:1px solid #dde0e5;border-radius:4px"></div>
 <div class="abs" style="left:152px;top:0;width:35px;height:36px;border:1px solid #dde0e5;border-radius:4px"></div>
</div>
<svg class="abs" style="left:1694px;top:370px" width="22" height="18" viewBox="0 0 22 18"><g fill="none" stroke="#e2503c" stroke-width="1.7"><rect x="3.3" y="1.9" width="5.8" height="5.9" rx="0.8"/><rect x="13.6" y="5" width="4.6" height="3" rx="0.6"/><path d="M1,11.8 H20.6 M1,16 H20.6 M3,11.8 V16 M10.5,11.8 V16 M18.2,11.8 V16"/></g></svg>
<svg class="abs" style="left:1733px;top:370px" width="18" height="18" viewBox="0 0 18 18"><g fill="none" stroke="#1b5b94" stroke-width="1.8" stroke-linecap="round" stroke-linejoin="round"><path d="M8.8,12 V2 M4.8,5.5 L8.8,1.5 L12.8,5.5"/><path d="M5,11 H2.5 Q1,11 1,12.5 V15.2 Q1,16.7 2.5,16.7 H14.8 Q16.3,16.7 16.3,15.2 V12.5 Q16.3,11 14.8,11 H12.5"/></g><circle cx="13" cy="14" r="0.9" fill="#1b5b94"/></svg>
<svg class="abs" style="left:1768px;top:371px" width="22" height="16" viewBox="0 0 22 16"><g fill="none" stroke="#007bff" stroke-width="1.9" stroke-linejoin="round"><path d="M2.5,12.5 H1.8 V3 Q1.8,1.2 3.6,1.2 H13 Q14.2,1.2 14.2,2.4 V12.5 H6.5"/><path d="M14.2,5 H17 L20.4,8.4 V12.5 H19.3"/></g><g fill="#007bff"><circle cx="4.5" cy="13" r="2.3"/><circle cx="8.7" cy="13" r="2.3"/><circle cx="17" cy="13" r="2.3"/><path d="M14.5,6 H16.8 L19.6,8.8 V11 H14.5Z"/></g><g fill="#eceef2"><circle cx="4.5" cy="13" r="0.9"/><circle cx="8.7" cy="13" r="0.9"/><circle cx="17" cy="13" r="0.9"/></g></svg>
<svg class="abs" style="left:1807px;top:370px" width="22" height="18" viewBox="0 0 22 18"><g fill="none" stroke="#3f51b5" stroke-width="1.8"><rect x="1.5" y="6.8" width="13.5" height="9.2" rx="1.5"/></g><g fill="#3f51b5"><rect x="3.3" y="0.5" width="10.5" height="1.3"/><rect x="2.5" y="3" width="12.3" height="1.6"/><circle cx="16.5" cy="13.5" r="4.5"/></g><path d="M16.5,11 V16 M14,13.5 H19" stroke="#fff" stroke-width="1.3"/></svg>
<svg class="abs" style="left:1847px;top:371px" width="13" height="16" viewBox="0 0 14 18"><path d="M8.5,1 L1.5,10 H6.5 L4.5,16.5 L12.5,7 H7.5Z" fill="none" stroke="#dc3545" stroke-width="1.9" stroke-linejoin="round"/></svg>
<div class="abs" style="left:1435px;top:412px;width:456px;height:440px;border:1px solid #dfe1e5;border-radius:4px;background:#fff;overflow:hidden">
 <div class="abs" style="left:0;top:0;width:456px;height:47px;background:#eceef2;border-bottom:1px solid #dfe1e5"></div>
</div>
<svg class="abs" style="left:1450px;top:424px" width="19" height="19" viewBox="0 0 21 21"><circle cx="8.3" cy="8.3" r="6.8" fill="none" stroke="#212529" stroke-width="2"/><path d="M13.2,13.2 L19.5,19.5" stroke="#212529" stroke-width="2.2" stroke-linecap="round"/></svg>
<div class="abs" style="left:1475px;top:423px;font-size:19.3px;line-height:23px;color:#212529;white-space:nowrap">Buscador</div>
<div class="lbl" style="left:1441px;top:473px">ORDEN_DE_COMPRA:</div>
<div class="inp" style="left:1441px;top:492px;width:426px;height:34px"></div>
<div class="lbl" style="left:1441px;top:534px;color:#dc3545">PALABRA_CLAVE / COMPATIBILIDAD:</div>
<div class="inp" style="left:1441px;top:553px;width:426px;height:34px"></div>
<div class="lbl" style="left:1441px;top:596px">CLAVE / PROVEEDOR / RFC:</div>
<div class="inp" style="left:1441px;top:615px;width:292px;height:34px;line-height:32px;padding-left:10px">Razon_Social / RFC</div>
<div class="lbl" style="left:1742px;top:596px">ID:</div>
<div class="inp" style="left:1742px;top:615px;width:144px;height:34px"></div>
<div class="lbl" style="left:1441px;top:657px">TIPO_FECHA:</div>
<div class="sel" style="left:1441px;top:676px;width:142px;height:37px">Ult_mod<svg class="chev" viewBox="0 0 10 10"><path d="M1,3 L5,7 L9,3" fill="none" stroke="#6c757d" stroke-width="1.8"/></svg></div>
<div class="lbl" style="left:1594px;top:657px">DE:</div>
<div class="inp" style="left:1594px;top:676px;width:139px;height:35px;line-height:33px;text-align:center">2020-01-01</div>
<div class="lbl" style="left:1742px;top:657px">A:</div>
<div class="inp" style="left:1742px;top:676px;width:144px;height:35px;line-height:33px;text-align:center">2020-01-01</div>
<div class="lbl" style="left:1441px;top:721px">CONSULTA_ESPECIAL:</div>
<div class="sel" style="left:1441px;top:740px;width:218px;height:36px">Activos<svg class="chev" viewBox="0 0 10 10"><path d="M1,3 L5,7 L9,3" fill="none" stroke="#6c757d" stroke-width="1.8"/></svg></div>
<div class="abs" style="left:1793px;top:740px;width:93px;height:36px;background:#007bff;border-radius:4px;color:#fff;font-size:16.4px;line-height:36px;padding-left:10px">Buscar</div>
<svg class="abs" style="left:1858px;top:750px" width="17" height="17" viewBox="0 0 20 20"><circle cx="8" cy="8" r="6.3" fill="none" stroke="#fff" stroke-width="2"/><path d="M12.5,12.5 L18,18" stroke="#fff" stroke-width="2.2" stroke-linecap="round"/></svg>
<div class="abs" style="left:1436px;top:786px;width:454px;height:50px;background:#eceef2;border-top:1px solid #dfe1e5"></div>
<div class="abs" style="left:1464px;top:793px;font-size:23.7px;line-height:25px;color:#212529">Reportes</div>
<div class="abs" style="left:1716px;top:791px;width:33px;height:36px;background:#28a745;border-radius:4px"></div>
<svg class="abs" style="left:1726px;top:801px" width="13" height="17" viewBox="0 0 13 17"><path d="M1,1 H7.6 L11.6,5 V15.2 H1Z" fill="none" stroke="#fff" stroke-width="2" stroke-linejoin="round"/><path d="M7,0.2 L12.4,5.6 H7Z" fill="#fff"/><path d="M3.9,8.5 L8.5,13.3 M8.5,8.5 L3.9,13.3" stroke="#fff" stroke-width="1.8"/></svg>
<div class="abs" style="left:1753px;top:791px;width:38px;height:36px;background:#dc3545;border-radius:4px"></div>
<svg class="abs" style="left:1763px;top:801px" width="19" height="17" viewBox="0 0 19 17"><path d="M3,15.2 H1 V1 H7.6 L11.6,5 V9" fill="none" stroke="#fff" stroke-width="2" stroke-linejoin="round"/><path d="M7,0.2 L12.4,5.6 H7Z" fill="#fff"/><text x="5" y="16.2" font-family="Liberation Sans" font-weight="bold" font-size="6.6" fill="#fff" transform="scale(1,1.1)" transform-origin="5 16.2">PDF</text></svg>
<div class="abs" style="left:1795px;top:791px;width:33px;height:36px;background:#007bff;border-radius:4px"></div>
<svg class="abs" style="left:1805px;top:801px" width="13" height="17" viewBox="0 0 13 17"><path d="M1,1 H7.6 L11.6,5 V15.2 H1Z" fill="none" stroke="#fff" stroke-width="2" stroke-linejoin="round"/><path d="M7,0.2 L12.4,5.6 H7Z" fill="#fff"/><path d="M3.3,9.2 H9.5 M3.3,12.3 H9.5" stroke="#fff" stroke-width="1.4"/></svg>
<!-- footer -->
<div class="abs" style="left:0;top:835px;width:1907px;height:34px;background:#eceef2"></div>
<div class="abs" style="left:0;top:819px;width:107px;height:50px;background:#222;border-top:2px solid #7b7b86;border-right:2px solid #6e6e78"></div>
<svg class="abs" style="left:5px;top:834px" width="26" height="24" viewBox="0 0 26 24"><rect x="0.3" y="0" width="25.5" height="23" rx="4" fill="#fff"/><g fill="#222"><rect x="3.8" y="4" width="4" height="2.6"/><rect x="10.8" y="4" width="4" height="2.6"/><rect x="17.8" y="4" width="4" height="2.6"/><rect x="3.8" y="10.2" width="4" height="2.6"/><rect x="10.8" y="10.2" width="4" height="2.6"/><rect x="17.8" y="10.2" width="4" height="2.6"/><rect x="3.8" y="16.4" width="4" height="2.6"/><rect x="10.8" y="16.4" width="4" height="2.6"/><rect x="17.8" y="16.4" width="4" height="2.6"/></g></svg>
<div class="abs" style="left:35px;top:832px;font-size:24.5px;line-height:27px;color:#fff;transform:scaleX(0.93);transform-origin:0 0">Menú</div>
<svg class="abs" style="left:246px;top:846px" width="80" height="18" viewBox="246 846 80 18"><g transform="translate(264.9,850.3) scale(0.3213,0.4145) translate(-53.3,-49.2)" fill="#2f2f2f"><use href="#letters"/></g><g transform="translate(248.9,849.5) scale(0.224,0.262) translate(-112.2,-2)" opacity="0.85" style="filter:grayscale(1) brightness(0.6)"><use href="#shipall"/></g></svg>
<div class="abs" style="left:330px;top:845px;font-size:14px;line-height:16px;color:#212529;white-space:nowrap;transform:scaleX(0.925);transform-origin:0 0">ERP 2003-2025 Alpherix es Marca Registrada © 8-53</div>
<svg class="abs" style="left:646px;top:849px" width="44" height="12" viewBox="0 0 44 12"><g fill="#4a4a4a"><rect x="4.2" y="0" width="0.9" height="2"/><rect x="1" y="1.8" width="7.4" height="4.6" rx="1.6"/><path d="M0.5,8.5 L1.5,11 L2,8.5Z M3.5,8.2 H7.5 L5.5,11.6Z M7.5,8.5 H8.6 V10.5 H7.5Z"/></g><g fill="#ccc"><rect x="2.2" y="3.3" width="1.6" height="1.2"/><rect x="5.4" y="3.3" width="1.6" height="1.2"/></g><g fill="none" stroke="#4a4a4a" stroke-width="1.5"><path d="M11.2,2.3 H17 V7.6 Q17,10.2 14.2,10.2 Q12,10.2 11.3,8.6"/><path d="M19,5 H22.6 M19,4.6 V10.3 H29"/><circle cx="25.4" cy="4.9" r="2.4"/><path d="M26.5,7 L28.4,9"/><circle cx="34.4" cy="3.8" r="2"/><circle cx="34.4" cy="7.6" r="2.6"/></g><g fill="#4a4a4a"><rect x="39.9" y="2.8" width="1.6" height="1.3"/><rect x="40.1" y="4.9" width="1.2" height="5.5"/></g></svg>
<div class="abs" style="left:691px;top:845px;font-size:14px;line-height:16px;color:#212529;white-space:nowrap">®</div>
<svg class="abs" style="left:709px;top:845px" width="86" height="20" viewBox="0 0 86 20"><ellipse cx="12.8" cy="9.5" rx="12" ry="9.4" fill="#8b0000"/><rect x="5.7" y="3.2" width="14.2" height="9.4" rx="2.2" fill="#fff"/><path d="M11,5.8 L15,7.9 L11,10Z" fill="#8b0000"/><circle cx="44" cy="9.5" r="10" fill="#0000ff"/><rect x="38.6" y="2.4" width="11.6" height="11.6" rx="1.8" fill="#fff"/><path d="M45.5,19 V11 H48 L48.4,8.3 H45.5 V6.8 Q45.5,5.6 46.8,5.6 H48.5 V3.3 H46.4 Q42.7,3.3 42.7,6.8 V8.3 H40.6 V11 H42.7 V19Z" fill="#0000ff"/><circle cx="73.9" cy="9.5" r="10" fill="#d62a8f"/><rect x="68.3" y="3.9" width="11.2" height="11.2" rx="3" fill="none" stroke="#fff" stroke-width="1.5"/><circle cx="73.9" cy="9.5" r="2.6" fill="none" stroke="#fff" stroke-width="1.5"/><circle cx="77.3" cy="6.2" r="0.8" fill="#fff"/></svg>
<div class="abs" style="left:801px;top:849px;font-size:10.4px;line-height:13px;color:#6c757d;white-space:nowrap">7.4.33&nbsp; 2026-03-31 16:33:52</div>
<svg class="abs" style="left:1477px;top:849px" width="18" height="14" viewBox="0 0 18 14"><g fill="none" stroke="#007bff" stroke-width="1.5" stroke-linecap="round"><path d="M0.8,9.5 L4,6.5 Q6,4.5 8,4 L9.5,3.5"/><path d="M5,12.5 L9,10.5 Q12,9 11.5,6.5 Q10.5,5 8,5.5 Q6,6.5 6.5,8.5"/><path d="M11,2.5 L13,0.8 M12.5,8.5 L16.8,5.5"/></g></svg>
<div class="abs" style="left:1508px;top:849px;font-size:13px;line-height:15px;color:#007bff;white-space:nowrap">Privacidad</div>
<svg class="abs" style="left:1591px;top:849px" width="11" height="14" viewBox="0 0 11 14"><path d="M0,1.2 Q0,0 1.2,0 H7 L10.2,3.2 V12.6 Q10.2,13.8 9,13.8 H1.2 Q0,13.8 0,12.6Z" fill="#007bff"/><g fill="none" stroke="#fff" stroke-width="0.9"><path d="M2,2 H5 M2,12 H8"/><rect x="2.5" y="6" width="5.5" height="3"/></g></svg>
<div class="abs" style="left:1616px;top:849px;font-size:13px;line-height:15px;color:#007bff;white-space:nowrap">Términos</div>
<svg class="abs" style="left:1690px;top:849px" width="14" height="14" viewBox="0 0 14 14"><circle cx="7" cy="5" r="4.2" fill="none" stroke="#007bff" stroke-width="1.4"/><circle cx="7" cy="5" r="2.5" fill="#007bff"/><path d="M1,13.8 Q1,9.5 7,9.5 Q13,9.5 13,13.8Z" fill="#007bff"/></svg>
<div class="abs" style="left:1718px;top:849px;font-size:13px;line-height:15px;color:#007bff;white-space:nowrap">Soporte SLA</div>
<svg class="abs" style="left:1813px;top:849px" width="14" height="14" viewBox="0 0 14 14"><g fill="none" stroke="#007bff" stroke-width="1.4"><rect x="0.8" y="4" width="12.4" height="3"/><rect x="1.8" y="7" width="10.4" height="6.2"/><path d="M7,4 V13.2 M7,4 Q4,0 3,2 Q2.5,3.5 7,4 Q10,0 11,2 Q11.5,3.5 7,4"/></g></svg>
<div class="abs" style="left:1841px;top:849px;font-size:13px;line-height:15px;color:#007bff;white-space:nowrap">Beneficios</div>
<svg class="abs" style="left:0;top:0;z-index:5" width="420" height="340" viewBox="0 0 420 340"><path d="M151.5,225.2 L177.5,221.4 Q179.8,221.6 179.5,224.2 Q179.2,225.8 177.5,226.4 L172,228.6 L392,321 Q393.5,321.9 392,322.5 L168.3,237.6 L171,242.6 Q171.6,245 169.6,245.8 Q167.8,246.2 166.8,245Z" fill="#e30000"/></svg>
</body></html>
